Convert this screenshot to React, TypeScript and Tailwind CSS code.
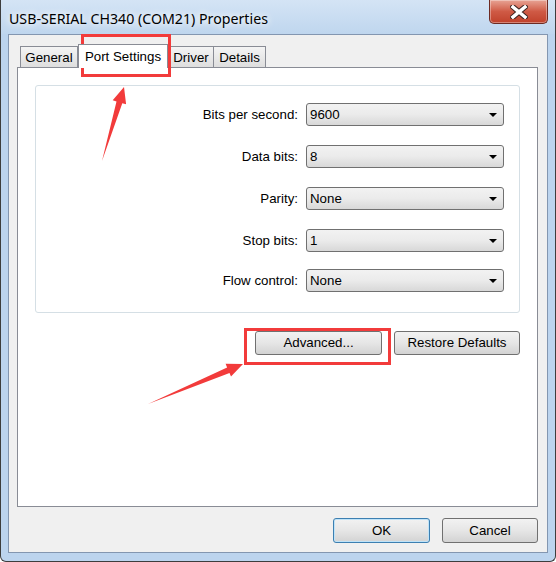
const labelFont = { fontFamily: '"Liberation Sans", Arial, sans-serif' };

const rows = [
    { label: 'Bits per second:', value: '9600', gap: '' },
    { label: 'Data bits:', value: '8', gap: 'mt-[19px]' },
    { label: 'Parity:', value: 'None', gap: 'mt-[19px]' },
    { label: 'Stop bits:', value: '1', gap: 'mt-[19px]' },
    { label: 'Flow control:', value: 'None', gap: 'mt-[17px]' },
];

const Combo = ({ value }: { value: string }) => (
    <div className="flex h-[23px] w-[198px] items-center justify-between rounded-[3px] border border-[#707070] bg-gradient-to-b from-[#f2f2f2] via-[#ebebeb] to-[#d8d8d8] pl-[3px] pr-[6px] text-black">
        <span>{value}</span>
        <svg width="8" height="4" viewBox="0 0 8 4">
            <path d="M0 0h8L4 4z" fill="#000" />
        </svg>
    </div>
);

const Button = ({ children, className }: { children: React.ReactNode; className: string }) => (
    <button className={`flex items-center justify-center rounded-[3px] border bg-gradient-to-b from-[#f2f2f2] via-[#e6e6e6] to-[#d3d3d3] text-black ${className}`}>
        {children}
    </button>
);

const Tab = ({ label, active, className }: { label: string; active?: boolean; className: string }) =>
    active ? (
        <div className={`relative z-10 -mb-px flex h-[24px] items-start justify-center border border-b-0 border-[#898c95] bg-white pt-[2px] ${className}`}>
            {label}
        </div>
    ) : (
        <div className={`flex h-[21px] items-center justify-center border border-b-0 border-[#898c95] bg-gradient-to-b from-[#f4f4f4] to-[#dedede] pt-[1px] ${className}`}>
            {label}
        </div>
    );

export default function App() {
    return (
        <div className="relative flex h-[562px] w-[556px] flex-col overflow-hidden rounded-b-[6px] border border-t-0 border-[#3d3d3d] bg-[#bcd4ee] text-[13.3px]" style={labelFont}>
            {/* title bar */}
            <div className="flex h-[34px] shrink-0 items-start justify-between bg-gradient-to-b from-[#d4e4f5] to-[#bfd6ee]">
                <div
                    className="mt-[8px] pl-[8px] text-[14.2px] text-black [text-shadow:0_0_10px_#ffffff,0_0_6px_#ffffff]"
                    style={{ fontFamily: '"Noto Sans", "Open Sans", sans-serif' }}
                >
                    USB-SERIAL CH340 (COM21) Properties
                </div>
                <div className="mr-[7px] flex h-[24px] w-[59px] items-center justify-center rounded-b-[5px] border border-t-0 border-[#6d2a22] bg-gradient-to-b from-[#e7a394] via-[#cf5a45] to-[#c0412b] shadow-[inset_0_0_0_1px_rgba(255,255,255,0.35)]">
                    <svg width="18" height="14" viewBox="0 0 18 14">
                        <path d="M3 2l12 10M15 2L3 12" stroke="#3b2320" strokeWidth="5.5" strokeLinecap="square" />
                        <path d="M3 2l12 10M15 2L3 12" stroke="#ffffff" strokeWidth="3.5" strokeLinecap="square" />
                    </svg>
                </div>
            </div>

            {/* client area */}
            <div className="mx-[7px] mb-[8px] flex flex-1 flex-col border border-[#8396b0] bg-[#f0f0f0] pt-[9px]">
                <div className="flex items-end pl-[11px]">
                    <Tab label="General" className="w-[58px]" />
                    <Tab label="Port Settings" active className="w-[90px]" />
                    <Tab label="Driver" className="w-[46px]" />
                    <Tab label="Details" className="-ml-px w-[53px]" />
                </div>

                <div className="ml-[8px] h-[440px] w-[521px] border border-[#898c95] bg-white px-[17px] pt-[17px]">
                    <div className="flex h-[228px] flex-col rounded-[3px] border border-[#d5dfe5] pr-[15px] pt-[17px]">
                        {rows.map((r) => (
                            <div key={r.label} className={`flex items-center justify-end gap-[8px] ${r.gap}`}>
                                <span className="text-black">{r.label}</span>
                                <Combo value={r.value} />
                            </div>
                        ))}
                    </div>
                    <div className="mt-[18px] flex justify-end gap-[12px]">
                        <Button className="h-[24px] w-[127px] border-[#707070]">Advanced...</Button>
                        <Button className="h-[24px] w-[126px] border-[#707070]">Restore Defaults</Button>
                    </div>
                </div>

                <div className="ml-[8px] mt-[11px] flex w-[521px] justify-end gap-[12px]">
                    <Button className="h-[25px] w-[97px] border-[#3c7fb1] shadow-[inset_0_0_0_1px_#bfe3f8]">OK</Button>
                    <Button className="h-[25px] w-[96px] border-[#707070]">Cancel</Button>
                </div>
            </div>

            {/* annotation overlay */}
            <svg className="pointer-events-none absolute left-0 top-0" width="556" height="562" viewBox="0 0 556 562">
                <rect x="81.5" y="35.5" width="87" height="40" fill="none" stroke="#f23b3b" strokeWidth="3" />
                <rect x="244.5" y="329.5" width="144" height="34" fill="none" stroke="#f23b3b" strokeWidth="3" />
                <polygon points="101,161 115.5,101.4 111.7,100.3 123,87 125.1,104.3 121.3,103.2" fill="#f23b3b" />
                <polygon points="147,404 226.1,367.4 224.6,363.8 242,364 230,376.6 228.5,373" fill="#f23b3b" />
            </svg>
        </div>
    );
}
